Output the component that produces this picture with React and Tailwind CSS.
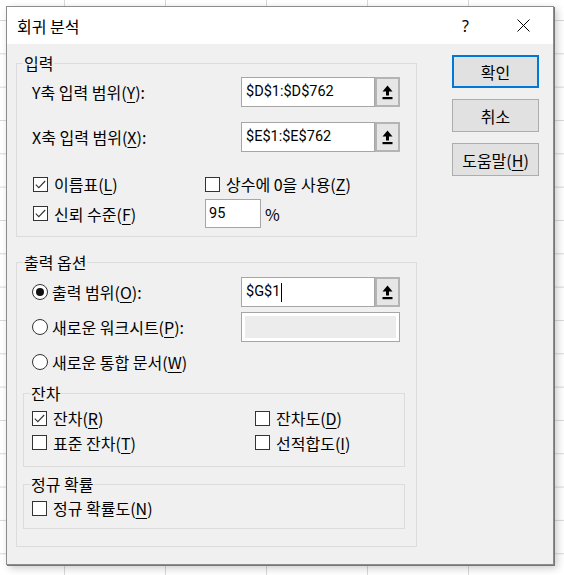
import React from 'react';

const Check = ({ checked }) => (
  <span className="flex h-[15px] w-[15px] shrink-0 items-center justify-center border border-[#333] bg-white">
    {checked && (
      <svg width="11" height="9" viewBox="0 0 11 9">
        <polyline points="0.8,4.6 3.8,7.6 10.2,1" fill="none" stroke="#333" strokeWidth="1.1" />
      </svg>
    )}
  </span>
);

const Radio = ({ checked }) => (
  <span className="flex h-[16px] w-[16px] shrink-0 items-center justify-center rounded-full border border-[#333] bg-white">
    {checked && <span className="h-[8px] w-[8px] rounded-full bg-[#111]" />}
  </span>
);

const Key = ({ children }) => <u className="decoration-1 underline-offset-[3px]">{children}</u>;

const PickButton = () => (
  <div className="flex h-[30px] w-[25px] items-center justify-center border-2 border-[#b4b4b4] bg-[#e6e6e6]">
    <svg width="11" height="15" viewBox="0 0 11 15">
      <polygon points="5.5,0.5 10.5,6.5 7,6.5 7,10.5 4,10.5 4,6.5 0.5,6.5" fill="#000" />
      <rect x="0.5" y="12" width="10" height="2.2" fill="#000" />
    </svg>
  </div>
);

const RefEdit = ({ value, caret }) => (
  <div className="flex">
    <div className="flex h-[30px] w-[134px] items-center border border-[#a6a6a6] bg-white pl-[4px] font-['Roboto',sans-serif] text-[14.5px]">
      {value}
      {caret && <span className="ml-px h-[19px] w-px bg-black" />}
    </div>
    <PickButton />
  </div>
);

const Group = ({ title, className = '', children }) => (
  <fieldset className={`border border-[#dcdcdc] p-0 ${className}`}>
    <legend className="ml-[6px] px-px leading-[20px]">{title}</legend>
    {children}
  </fieldset>
);

const CheckItem = ({ checked, children, className = '' }) => (
  <div className={`flex items-center gap-[6px] ${className}`}>
    <Check checked={checked} />
    <span>{children}</span>
  </div>
);

const RadioItem = ({ checked, children }) => (
  <div className="flex items-center gap-[4px]">
    <Radio checked={checked} />
    <span>{children}</span>
  </div>
);

const DialogButton = ({ primary, children }) => (
  <button
    className={`h-[33px] w-[87px] bg-[#e1e1e1] ${primary ? 'border-2 border-[#0078d7]' : 'border border-[#adadad]'}`}
  >
    {children}
  </button>
);

export default function App() {
  return (
    <div className="h-[575px] w-[564px] overflow-hidden bg-white bg-[linear-gradient(to_right,#d8d8d8_1px,transparent_1px),linear-gradient(to_bottom,#d8d8d8_1px,transparent_1px)] bg-[length:101px_33.33px] bg-[position:64px_20px] pl-[6px] pt-[6px] font-['Noto_Sans_CJK_KR',sans-serif] text-[16px] leading-[20px] text-black">
      <div className="flex h-[559px] w-[548px] flex-col border border-[#8c8c8c] bg-[#f0f0f0] shadow-[1px_1px_0_#777,3px_3px_8px_rgba(0,0,0,0.22)]">
        {/* Title bar */}
        <div className="flex h-[37px] items-center bg-white pl-[10px]">
          <span>회귀 분석</span>
          <span className="ml-auto mr-[48px] font-['Noto_Sans',sans-serif] text-[16px]">?</span>
          <svg className="mr-[23px]" width="13" height="13" viewBox="0 0 13 13">
            <path d="M0.5 0.5 L12.5 12.5 M12.5 0.5 L0.5 12.5" stroke="#000" strokeWidth="1" />
          </svg>
        </div>

        <div className="flex pl-[9px] pt-[9px]">
          {/* Left column */}
          <div className="flex w-[401px] flex-col">
            <Group title="입력" className="pb-[8px]">
              <div className="pl-[15px] pr-[16px]">
                <div className="mt-[4px] flex h-[30px] items-center">
                  <span>Y축 입력 범위(<Key>Y</Key>):</span>
                  <div className="ml-auto">
                    <RefEdit value="$D$1:$D$762" />
                  </div>
                </div>
                <div className="mt-[15px] flex h-[30px] items-center">
                  <span>X축 입력 범위(<Key>X</Key>):</span>
                  <div className="ml-auto">
                    <RefEdit value="$E$1:$E$762" />
                  </div>
                </div>
                <div className="mt-[20px] flex h-[24px] items-center pl-px">
                  <CheckItem checked className="w-[172px]">
                    이름표(<Key>L</Key>)
                  </CheckItem>
                  <CheckItem>
                    상수에 0을 사용(<Key>Z</Key>)
                  </CheckItem>
                </div>
                <div className="mt-[3px] flex h-[29px] items-center pl-px">
                  <CheckItem checked className="w-[172px]">
                    신뢰 수준(<Key>F</Key>)
                  </CheckItem>
                  <div className="flex h-[29px] w-[56px] items-center border border-[#a6a6a6] bg-white pl-[3px] font-['Roboto',sans-serif] text-[14.5px]">
                    95
                  </div>
                  <span className="ml-[4px]">%</span>
                </div>
              </div>
            </Group>

            <Group title="출력 옵션" className="mt-[15px] pb-[17px]">
              <div className="pl-[15px] pr-[16px]">
                <div className="mt-[5px] flex h-[30px] items-center">
                  <RadioItem checked>
                    출력 범위(<Key>O</Key>):
                  </RadioItem>
                  <div className="ml-auto">
                    <RefEdit value="$G$1" caret />
                  </div>
                </div>
                <div className="mt-[5px] flex h-[30px] items-center">
                  <RadioItem>
                    새로운 워크시트(<Key>P</Key>):
                  </RadioItem>
                  <div className="ml-auto h-[30px] w-[159px] border border-[#a6a6a6] bg-white p-[3px]">
                    <div className="h-full w-full bg-[#ececec]" />
                  </div>
                </div>
                <div className="mt-[8px] flex h-[24px] items-center">
                  <RadioItem>
                    새로운 통합 문서(<Key>W</Key>)
                  </RadioItem>
                </div>
              </div>

              <Group title="잔차" className="ml-[6px] mr-[11px] mt-[9px] pb-[11px]">
                <div className="pl-[8px]">
                  <div className="mt-[3px] flex h-[24px] items-center">
                    <CheckItem checked className="w-[223px]">
                      잔차(<Key>R</Key>)
                    </CheckItem>
                    <CheckItem>
                      잔차도(<Key>D</Key>)
                    </CheckItem>
                  </div>
                  <div className="flex h-[25px] items-center">
                    <CheckItem className="w-[223px]">
                      표준 잔차(<Key>T</Key>)
                    </CheckItem>
                    <CheckItem>
                      선적합도(<Key>I</Key>)
                    </CheckItem>
                  </div>
                </div>
              </Group>

              <Group title="정규 확률" className="ml-[6px] mr-[11px] mt-[7px] pb-[8px]">
                <div className="mt-[2px] flex h-[24px] items-center pl-[8px]">
                  <CheckItem>
                    정규 확률도(<Key>N</Key>)
                  </CheckItem>
                </div>
              </Group>
            </Group>
          </div>

          {/* Right column */}
          <div className="ml-[35px] flex flex-col gap-[11px] pt-[2px]">
            <DialogButton primary>확인</DialogButton>
            <DialogButton>취소</DialogButton>
            <DialogButton>
              도움말(<Key>H</Key>)
            </DialogButton>
          </div>
        </div>
      </div>
    </div>
  );
}
